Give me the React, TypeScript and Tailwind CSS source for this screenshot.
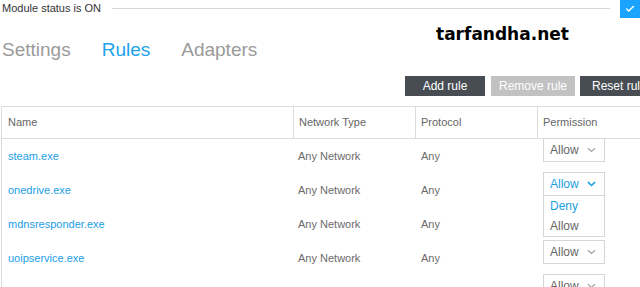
import {Check} from 'lucide-react'

type TRule = {
  name: string
  network: string
  protocol: string
  open?: boolean
  covered?: boolean
}

const rules: TRule[] = [
  {name: 'steam.exe', network: 'Any Network', protocol: 'Any'},
  {name: 'onedrive.exe', network: 'Any Network', protocol: 'Any', open: true},
  // select of this row sits under the open dropdown
  {name: 'mdnsresponder.exe', network: 'Any Network', protocol: 'Any', covered: true},
  {name: 'uoipservice.exe', network: 'Any Network', protocol: 'Any'},
  {name: '', network: '', protocol: ''},
]

function Chevron({open}: {open?: boolean}) {
  return (
    <svg width="9" height="6" viewBox="0 0 9 6" className="shrink-0">
      <path
        d="M1 1.2 L4.5 4.5 L8 1.2"
        fill="none"
        stroke={open ? '#1a9ee6' : '#a0a0a0'}
        strokeWidth={open ? 1.6 : 1.2}
      />
    </svg>
  )
}

function PermissionSelect({open}: {open?: boolean}) {
  return (
    <div className="relative w-[62px] h-[24px]">
      <div className="flex items-center justify-between h-full border border-[#d6d6d6] bg-white pl-[6px] pr-[8px]">
        <span className={`text-[12px] ${open ? 'text-[#1a9ee6]' : 'text-[#666]'}`}>
          Allow
        </span>
        <Chevron open={open} />
      </div>
      {open && (
        <div className="absolute left-0 top-[23px] z-10 w-[62px] h-[42px] border border-[#d6d6d6] bg-white pl-[6px]">
          <div className="h-[20px] flex items-center text-[12px] text-[#1a9ee6]">Deny</div>
          <div className="h-[20px] flex items-center text-[12px] text-[#666]">Allow</div>
        </div>
      )}
    </div>
  )
}

function App() {
  return (
    <div className="relative w-[640px] h-[287px] overflow-hidden bg-white font-['Liberation_Sans',Arial,sans-serif]">
      {/* status bar */}
      <div className="flex items-center h-[18px]">
        <span className="pl-[2px] -mt-[2px] text-[11px] leading-none text-[#333]">
          Module status is ON
        </span>
        <div className="flex-1 ml-[11px] mr-[10px] -mt-[2px] h-px bg-[#d6d6d6]" />
        <div className="w-[20px] h-[18px] bg-[#1aa3ff] flex items-center justify-center">
          <Check size={10} strokeWidth={3.5} color="#fff" />
        </div>
      </div>

      {/* tabs */}
      <div className="flex mt-[20px] h-[24px] pl-[2px] gap-[31px] text-[19px] leading-[24px] text-[#9a9a9a]">
        <span>Settings</span>
        <span className="text-[#1ca3ec]">Rules</span>
        <span>Adapters</span>
      </div>

      <div className="absolute left-[436px] top-[26px] font-['DejaVu_Sans',sans-serif] font-bold text-[17px] leading-none text-black">
        tarfandha.net
      </div>

      {/* actions */}
      <div className="flex mt-[14px] h-[20px] pl-[405px] text-[12px] leading-[20px] text-white whitespace-nowrap">
        <button className="shrink-0 w-[80px] bg-[#474d53] text-center">Add rule</button>
        <button className="shrink-0 ml-[6px] w-[84px] bg-[#c2c2c2] text-center">Remove rule</button>
        <button className="shrink-0 ml-[5px] pl-[12px] pr-[12px] bg-[#474d53]">Reset rule</button>
      </div>

      {/* table */}
      <div className="mt-[10px] ml-[1px] w-[700px] border-l border-t border-[#dcdcdc]">
        <div className="flex h-[32px] border-b border-[#dcdcdc] text-[11px] text-[#666]">
          <div className="w-[291px] pl-[6px] flex items-center">Name</div>
          <div className="w-[122px] pl-[5px] flex items-center border-l border-[#dcdcdc]">
            Network Type
          </div>
          <div className="w-[122px] pl-[5px] flex items-center border-l border-[#dcdcdc]">
            Protocol
          </div>
          <div className="flex-1 pl-[5px] flex items-center border-l border-[#dcdcdc]">
            Permission
          </div>
        </div>
        {rules.map((rule, index) => (
          <div key={index} className="flex h-[34px] text-[11px]">
            <div className="w-[291px] pl-[6px] flex items-center text-[#1a9ee6]">{rule.name}</div>
            <div className="w-[123px] pl-[5px] flex items-center text-[#6b6b6b]">{rule.network}</div>
            <div className="w-[122px] pl-[5px] flex items-center text-[#6b6b6b]">{rule.protocol}</div>
            <div className="flex-1 pl-[5px] -mt-px">
              {!rule.covered && <PermissionSelect open={rule.open} />}
            </div>
          </div>
        ))}
      </div>
    </div>
  )
}

export default App
